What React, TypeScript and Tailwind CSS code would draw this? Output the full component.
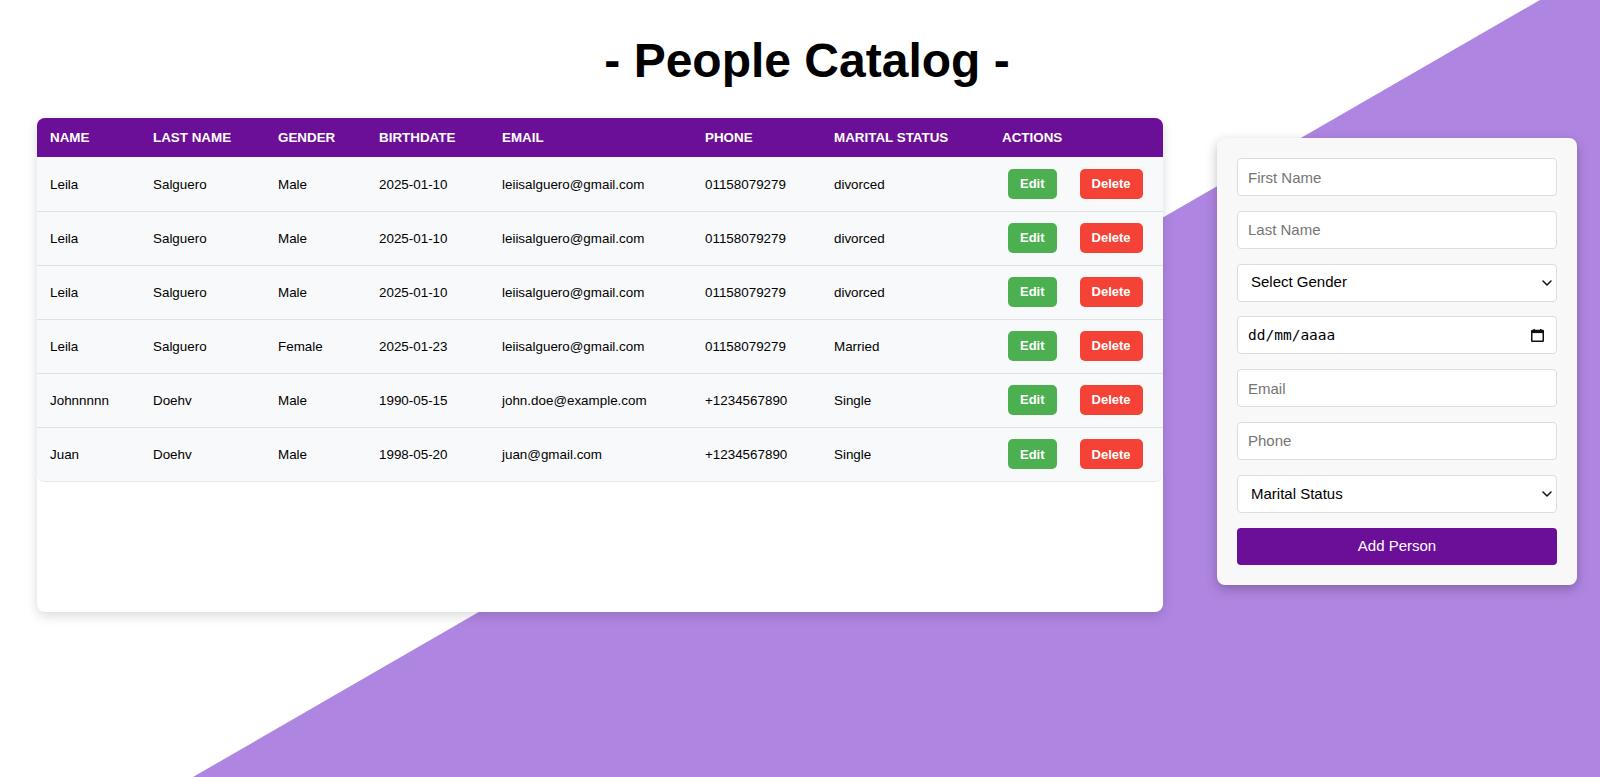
import React, { useState } from 'react';

type Person = {
    name: string;
    lastName: string;
    gender: string;
    birthdate: string;
    email: string;
    phone: string;
    maritalStatus: string;
};

const people: Person[] = [
    { name: 'Leila', lastName: 'Salguero', gender: 'Male', birthdate: '2025-01-10', email: 'leiisalguero@gmail.com', phone: '01158079279', maritalStatus: 'divorced' },
    { name: 'Leila', lastName: 'Salguero', gender: 'Male', birthdate: '2025-01-10', email: 'leiisalguero@gmail.com', phone: '01158079279', maritalStatus: 'divorced' },
    { name: 'Leila', lastName: 'Salguero', gender: 'Male', birthdate: '2025-01-10', email: 'leiisalguero@gmail.com', phone: '01158079279', maritalStatus: 'divorced' },
    { name: 'Leila', lastName: 'Salguero', gender: 'Female', birthdate: '2025-01-23', email: 'leiisalguero@gmail.com', phone: '01158079279', maritalStatus: 'Married' },
    { name: 'Johnnnnn', lastName: 'Doehv', gender: 'Male', birthdate: '1990-05-15', email: 'john.doe@example.com', phone: '+1234567890', maritalStatus: 'Single' },
    { name: 'Juan', lastName: 'Doehv', gender: 'Male', birthdate: '1998-05-20', email: 'juan@gmail.com', phone: '+1234567890', maritalStatus: 'Single' },
];

const Chevron: React.FC = () => (
    <svg className="pointer-events-none absolute right-[5px] top-1/2 -translate-y-1/2" width="10" height="6" viewBox="0 0 10 6" fill="none">
        <path d="M1 1l4 4 4-4" stroke="#111" strokeWidth="1.5" strokeLinecap="round" strokeLinejoin="round" />
    </svg>
);

const inputClass =
    'h-[38px] w-full rounded-[4px] border border-[#dddddd] bg-white px-[10px] text-[15px] text-black outline-none placeholder:text-[#757575]';

const App: React.FC = () => {
    const [gender, setGender] = useState('');
    const [marital, setMarital] = useState('');

    return (
        <div className="relative min-h-[777px] w-full overflow-hidden bg-white font-['Liberation_Sans',Arial,sans-serif] text-black">
            {/* diagonal purple background */}
            <div className="absolute inset-0 bg-[#af85e2] [clip-path:polygon(96.25%_0,100%_0,100%_100%,12.06%_100%)]" />

            <div className="relative pl-[37px] pr-[23px] pt-[37px]">
                <h1 className="text-center text-[48px] font-bold leading-[48px]">- People Catalog -</h1>

                <div className="mt-[33px] flex items-start">
                    {/* table card */}
                    <div className="h-[494px] w-[1126px] shrink-0 rounded-lg bg-white shadow-[0_4px_12px_rgba(0,0,0,0.15)]">
                        <div className="overflow-hidden rounded-lg border-b border-[#e5e7eb]">
                            <table className="w-full table-fixed border-collapse text-left text-[13.4px]">
                                <thead>
                                    <tr className="h-[39px] bg-[#6b0e98] text-white">
                                        <th className="w-[103px] px-[13px] pt-[2px] font-bold">NAME</th>
                                        <th className="w-[125px] px-[13px] pt-[2px] font-bold">LAST NAME</th>
                                        <th className="w-[101px] px-[13px] pt-[2px] font-bold">GENDER</th>
                                        <th className="w-[123px] px-[13px] pt-[2px] font-bold">BIRTHDATE</th>
                                        <th className="w-[203px] px-[13px] pt-[2px] font-bold">EMAIL</th>
                                        <th className="w-[129px] px-[13px] pt-[2px] font-bold">PHONE</th>
                                        <th className="w-[168px] px-[13px] pt-[2px] font-bold">MARITAL STATUS</th>
                                        <th className="w-[174px] px-[13px] pt-[2px] font-bold">ACTIONS</th>
                                    </tr>
                                </thead>
                                <tbody>
                                    {people.map((p, i) => (
                                        <tr key={i} className="h-[54px] border-t border-[#dee2e6] bg-[#f8f9fa] first:border-t-0">
                                            <td className="px-[13px] pt-[2px]">{p.name}</td>
                                            <td className="px-[13px] pt-[2px]">{p.lastName}</td>
                                            <td className="px-[13px] pt-[2px]">{p.gender}</td>
                                            <td className="px-[13px] pt-[2px]">{p.birthdate}</td>
                                            <td className="px-[13px] pt-[2px]">{p.email}</td>
                                            <td className="px-[13px] pt-[2px]">{p.phone}</td>
                                            <td className="px-[13px] pt-[2px]">{p.maritalStatus}</td>
                                            <td className="px-[13px]">
                                                <div className="ml-[6px] flex items-center gap-[23px]">
                                                    <button className="h-[30px] rounded-[5px] bg-[#4caf50] px-3 text-[13px] font-bold text-white">
                                                        Edit
                                                    </button>
                                                    <button className="h-[30px] rounded-[5px] bg-[#f44336] px-3 text-[13px] font-bold text-white">
                                                        Delete
                                                    </button>
                                                </div>
                                            </td>
                                        </tr>
                                    ))}
                                </tbody>
                            </table>
                        </div>
                    </div>

                    {/* form card */}
                    <div className="ml-[54px] mt-[20px] w-[360px] shrink-0 rounded-lg bg-[#f8f8f8] p-5 shadow-[0_4px_12px_rgba(0,0,0,0.25)]">
                        <form className="flex flex-col gap-[14.8px]" onSubmit={e => e.preventDefault()}>
                            <input className={inputClass} placeholder="First Name" />
                            <input className={inputClass} placeholder="Last Name" />
                            <div className="relative">
                                <select
                                    value={gender}
                                    onChange={e => setGender(e.target.value)}
                                    className="h-[38px] w-full appearance-none rounded-[4px] border border-[#dddddd] bg-white pl-[13px] pr-6 text-[15px] text-black outline-none"
                                >
                                    <option value="">Select Gender</option>
                                    <option value="Male">Male</option>
                                    <option value="Female">Female</option>
                                </select>
                                <Chevron />
                            </div>
                            <div className="flex h-[38px] w-full items-center justify-between rounded-[4px] border border-[#dddddd] bg-white pl-[10px] pr-[12px]">
                                <span className="font-['DejaVu_Sans_Mono',monospace] text-[14.5px] text-black">dd/mm/aaaa</span>
                                <svg width="13" height="13" viewBox="0 0 13 13" fill="none">
                                    <rect x="0.75" y="1.5" width="11.5" height="10.75" rx="0.5" stroke="#111" strokeWidth="1.5" />
                                    <rect x="0.75" y="1.5" width="11.5" height="2.6" fill="#111" />
                                    <rect x="2.5" y="0" width="1.5" height="2" fill="#111" />
                                    <rect x="9" y="0" width="1.5" height="2" fill="#111" />
                                </svg>
                            </div>
                            <input className={inputClass} placeholder="Email" />
                            <input className={inputClass} placeholder="Phone" />
                            <div className="relative">
                                <select
                                    value={marital}
                                    onChange={e => setMarital(e.target.value)}
                                    className="h-[38px] w-full appearance-none rounded-[4px] border border-[#dddddd] bg-white pl-[13px] pr-6 text-[15px] text-black outline-none"
                                >
                                    <option value="">Marital Status</option>
                                    <option value="Single">Single</option>
                                    <option value="Married">Married</option>
                                    <option value="divorced">divorced</option>
                                </select>
                                <Chevron />
                            </div>
                            <button type="submit" className="h-[37px] w-full rounded-[4px] bg-[#6b0e98] text-[15px] text-white">
                                Add Person
                            </button>
                        </form>
                    </div>
                </div>
            </div>
        </div>
    );
};

export default App;
